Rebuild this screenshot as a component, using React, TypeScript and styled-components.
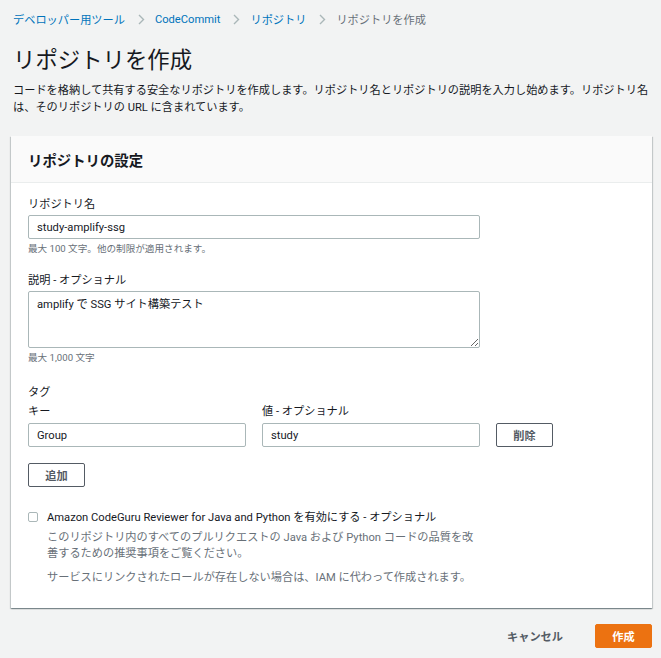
import React from "react";
import styled, { createGlobalStyle } from "styled-components";

const Global = createGlobalStyle`
  html, body { margin: 0; padding: 0; background: #f2f3f3; }
  body {
    font-family: Roboto, "Noto Sans CJK JP", sans-serif;
    color: #16191f;
    font-size: 11.2px;
  }
  * { box-sizing: border-box; }
`;

const Page = styled.div`
  padding: 10px 9px 10px 11px;
  min-height: 658px;
`;

const Crumbs = styled.nav`
  display: flex;
  align-items: center;
  height: 18px;
  padding-left: 2px;
  font-size: 11.2px;
`;

const Crumb = styled.span<{ $current?: boolean }>`
  color: ${(p) => (p.$current ? "#687078" : "#0073bb")};
`;

const Sep = styled.span`
  display: inline-flex;
  margin: 0 10px 0 13px;
`;

const Title = styled.h1`
  margin: 17px 0 0 2px;
  font-size: 22.4px;
  font-weight: 400;
  line-height: 30px;
`;

const Intro = styled.p`
  margin: 7px 0 0 2px;
  font-size: 11.2px;
  line-height: 17px;
`;

const Panel = styled.section`
  margin-top: 20px;
  background: #fff;
  box-shadow: 0 1px 1px 0 rgba(0, 28, 36, 0.3), 1px 1px 1px 0 rgba(0, 28, 36, 0.15),
    -1px 1px 1px 0 rgba(0, 28, 36, 0.15);
`;

const PanelHeader = styled.header`
  height: 47px;
  display: flex;
  align-items: center;
  padding: 0 17px;
  background: #fafafa;
  border-bottom: 1px solid #eaeded;
  font-size: 14.4px;
  font-weight: 700;
`;

const PanelBody = styled.div`
  padding: 14px 17px 22px;
  display: flex;
  flex-direction: column;
`;

const Field = styled.div<{ $gap?: number }>`
  margin-top: ${(p) => p.$gap ?? 0}px;
  display: flex;
  flex-direction: column;
`;

const Label = styled.label`
  font-size: 11.2px;
  line-height: 16px;
  margin-bottom: 2px;
`;

const Hint = styled.div`
  margin-top: 3px;
  font-size: 9.6px;
  line-height: 14px;
  color: #687078;
`;

const TextInput = styled.input<{ $w?: number }>`
  width: ${(p) => p.$w ?? 452}px;
  height: 24px;
  border: 1px solid #aab7b8;
  border-radius: 2px;
  padding: 0 8px;
  font: inherit;
  font-size: 11.2px;
  color: #16191f;
  background: #fff;
`;

const TextArea = styled.textarea`
  width: 452px;
  height: 57px;
  border: 1px solid #aab7b8;
  border-radius: 2px;
  padding: 5px 8px;
  font: inherit;
  font-size: 11.2px;
  line-height: 16px;
  color: #16191f;
  display: block;
`;

const SectionTitle = styled.div`
  margin-top: 20px;
  font-size: 11.2px;
  line-height: 16px;
`;

const TagGrid = styled.div`
  margin-top: 3px;
  display: grid;
  grid-template-columns: 218px 218px auto;
  column-gap: 16px;
  row-gap: 3px;
  align-items: center;
  justify-items: start;
`;

const GridLabel = styled.div`
  font-size: 11.2px;
  line-height: 16px;
`;

const Button = styled.button<{ $primary?: boolean; $plain?: boolean }>`
  height: 24px;
  min-width: 57px;
  padding: 0 14px;
  border-radius: 2px;
  font-family: inherit;
  font-size: 11.2px;
  font-weight: 700;
  cursor: pointer;
  border: 1px solid ${(p) => (p.$primary ? "#ec7211" : p.$plain ? "transparent" : "#545b64")};
  background: ${(p) => (p.$primary ? "#ec7211" : p.$plain ? "transparent" : "#fff")};
  color: ${(p) => (p.$primary ? "#fff" : "#545b64")};
`;

const AddRow = styled.div`
  margin-top: 16px;
`;

const CheckRow = styled.div`
  margin-top: 23px;
  display: flex;
  align-items: flex-start;
  gap: 9px;
`;

const Box = styled.span`
  width: 10px;
  height: 10px;
  margin-top: 2px;
  border: 1px solid #aab7b8;
  border-radius: 2px;
  background: #fff;
  flex: none;
`;

const CheckText = styled.div`
  display: flex;
  flex-direction: column;
  font-size: 11.2px;
  line-height: 16px;
`;

const CheckDesc = styled.p<{ $gap?: number }>`
  margin: ${(p) => p.$gap ?? 0}px 0 0;
  color: #687078;
  width: 435px;
`;

const Footer = styled.div`
  margin-top: 16px;
  display: flex;
  justify-content: flex-end;
  align-items: center;
  gap: 17px;
`;

const Chevron = () => (
  <svg width="7" height="11" viewBox="0 0 7 11" fill="none">
    <path d="M1 1l4.5 4.5L1 10" stroke="#aab7b8" strokeWidth="1.4" />
  </svg>
);

export default function App() {
  return (
    <>
      <Global />
      <Page>
        <Crumbs>
          <Crumb>デベロッパー用ツール</Crumb>
          <Sep><Chevron /></Sep>
          <Crumb>CodeCommit</Crumb>
          <Sep><Chevron /></Sep>
          <Crumb>リポジトリ</Crumb>
          <Sep><Chevron /></Sep>
          <Crumb $current>リポジトリを作成</Crumb>
        </Crumbs>
        <Title>リポジトリを作成</Title>
        <Intro>
          コードを格納して共有する安全なリポジトリを作成します。リポジトリ名とリポジトリの説明を入力し始めます。リポジトリ名は、そのリポジトリの URL に含まれています。
        </Intro>
        <Panel>
          <PanelHeader>リポジトリの設定</PanelHeader>
          <PanelBody>
            <Field>
              <Label>リポジトリ名</Label>
              <TextInput defaultValue="study-amplify-ssg" />
              <Hint>最大 100 文字。他の制限が適用されます。</Hint>
            </Field>
            <Field $gap={17}>
              <Label>説明 - オプショナル</Label>
              <TextArea defaultValue="amplify で SSG サイト構築テスト" />
              <Hint>最大 1,000 文字</Hint>
            </Field>
            <SectionTitle>タグ</SectionTitle>
            <TagGrid>
              <GridLabel>キー</GridLabel>
              <GridLabel>値 - オプショナル</GridLabel>
              <span />
              <TextInput $w={218} defaultValue="Group" />
              <TextInput $w={218} defaultValue="study" />
              <Button>削除</Button>
            </TagGrid>
            <AddRow>
              <Button>追加</Button>
            </AddRow>
            <CheckRow>
              <Box />
              <CheckText>
                <span>Amazon CodeGuru Reviewer for Java and Python を有効にする - オプショナル</span>
                <CheckDesc $gap={4}>
                  このリポジトリ内のすべてのプルリクエストの Java および Python コードの品質を改善するための推奨事項をご覧ください。
                </CheckDesc>
                <CheckDesc $gap={8}>
                  サービスにリンクされたロールが存在しない場合は、IAM に代わって作成されます。
                </CheckDesc>
              </CheckText>
            </CheckRow>
          </PanelBody>
        </Panel>
        <Footer>
          <Button $plain>キャンセル</Button>
          <Button $primary>作成</Button>
        </Footer>
      </Page>
    </>
  );
}
